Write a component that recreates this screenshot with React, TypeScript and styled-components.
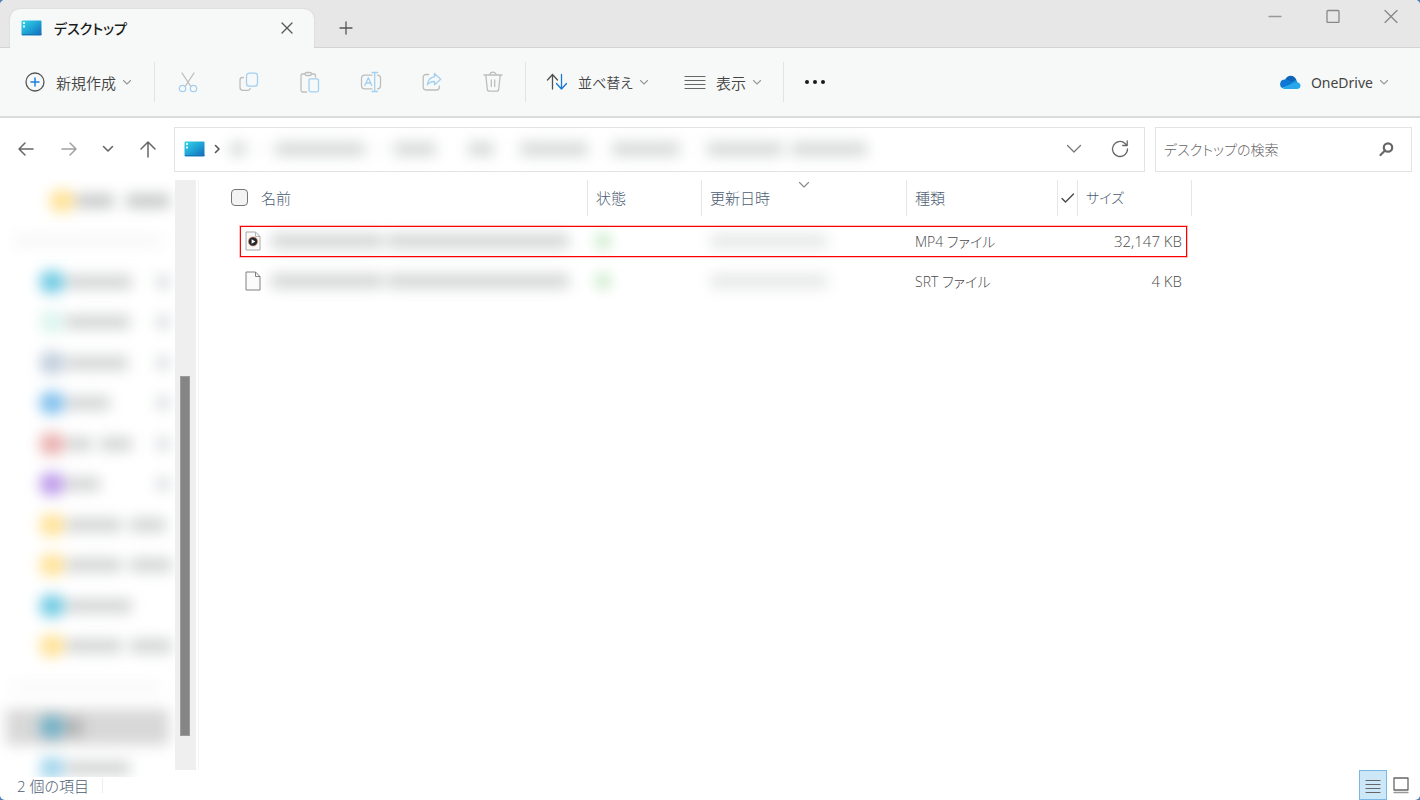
import React, { useState } from "react";
import styled, { createGlobalStyle, css } from "styled-components";

const GlobalStyle = createGlobalStyle`
  * { box-sizing: border-box; }
  body {
    margin: 0;
    background: #4b7fb5;
    color: #444;
    font-family: "Open Sans", "Noto Sans CJK JP", sans-serif;
    font-size: 15px;
    font-feature-settings: "palt";
  }
  button, input { font: inherit; font-feature-settings: inherit; color: inherit; }
  button { padding: 0; border: 0; background: none; cursor: pointer; }
  button:disabled { cursor: default; }
  ul { list-style: none; margin: 0; padding: 0; }
  svg { display: block; flex: none; }
`;

const Window = styled.div`
  display: flex;
  flex-direction: column;
  min-height: 100vh;
  background: #fff;
  border-radius: 5px;
  overflow: hidden;
`;

/* ---------- title bar ---------- */
const TitleBar = styled.header`
  display: flex;
  height: 48px;
  padding-left: 10px;
  background: #e7e7e7;
  box-shadow: inset 0 -1px #d3d3d3;
`;

const Tab = styled.div`
  display: flex;
  align-items: center;
  gap: 12px;
  width: 304px;
  height: 39px;
  margin-top: 9px;
  padding: 0 18px 2px 11px;
  border-radius: 10px 10px 0 0;
  background: #f7f9f8;
  box-shadow: 0 0 2px #ccc;
  color: #1c1c1c;
  clip-path: inset(-3px -3px 0 -3px);
`;

const TabTitle = styled.span`
  flex: 1;
  font-size: 14px;
  font-weight: 500;
`;

const IconButton = styled.button<{ $width?: number }>`
  display: flex;
  align-items: center;
  justify-content: center;
  width: ${(p) => p.$width ?? 18}px;
  height: 32px;
`;

const NewTab = styled(IconButton)`
  margin: 12px 0 0 16px;
`;

const WindowControls = styled.div`
  display: flex;
  margin-left: auto;
`;

/* ---------- toolbar ---------- */
const Toolbar = styled.div`
  display: flex;
  align-items: center;
  height: 70px;
  padding: 0 31px 0 24px;
  background: #f7f9f8;
  border-bottom: 2px solid #dadbdb;
`;

const MenuButton = styled.button<{ $kana?: boolean }>`
  display: flex;
  align-items: center;
  gap: 10px;
  height: 36px;
  font-size: ${(p) => (p.$kana ? 14 : 15)}px;
  font-weight: 350;
  white-space: nowrap;
  svg:last-child { margin-left: -4px; }
`;

const AccountButton = styled(MenuButton)`
  font-family: "Noto Sans", sans-serif;
  font-size: 14px;
  font-weight: 400;
`;

const Divider = styled.span<{ $before: number; $after: number }>`
  width: 1px;
  height: 40px;
  margin: 0 ${(p) => p.$after}px 0 ${(p) => p.$before}px;
  background: #e2e4e4;
`;

const Spacer = styled.span<{ $size?: number }>`
  flex: ${(p) => (p.$size ? `0 0 ${p.$size}px` : "1")};
`;

/* ---------- address row ---------- */
const AddressRow = styled.div`
  display: flex;
  align-items: center;
  height: 62px;
  padding: 0 8px 0 15px;
`;

const NavButtons = styled.nav`
  display: flex;
  align-items: center;
  justify-content: space-between;
  width: 144px;
  margin-right: 15px;
`;

const boxed = css`
  display: flex;
  align-items: center;
  height: 45px;
  border: 1px solid #e3e3e3;
  background: #fff;
`;

const PathBox = styled.div`
  ${boxed}
  flex: 1;
  gap: 9px;
  padding: 0 13px 0 9px;
  margin-right: 10px;
`;

const SearchBox = styled.label`
  ${boxed}
  width: 257px;
  padding: 0 17px 0 8px;
`;

const SearchInput = styled.input`
  flex: 1;
  min-width: 0;
  padding: 0;
  border: 0;
  outline: 0;
  background: none;
  font-size: 14px;
  font-weight: 300;
  &::placeholder { color: #666; opacity: 1; }
`;

/* ---------- redacted content ---------- */
const Blurred = styled.span`
  display: flex;
  align-items: center;
  filter: blur(7px);
`;

const Bar = styled.i<{ $w: number; $gap?: number; $tone?: string; $h?: number }>`
  flex: none;
  width: ${(p) => p.$w}px;
  height: ${(p) => p.$h ?? 14}px;
  margin-left: ${(p) => p.$gap ?? 0}px;
  border-radius: 3px;
  background: ${(p) => p.$tone ?? "#d2d4d4"};
`;

/* ---------- body ---------- */
const Body = styled.div`
  display: flex;
  flex: 1;
`;

const Sidebar = styled.nav`
  width: 175px;
  height: 597px;
  margin-bottom: -7px;
  overflow: hidden;
`;

const SideItem = styled.li<{ $selected?: boolean; $indent?: number }>`
  position: relative;
  display: flex;
  align-items: center;
  height: 41px;
  padding-left: ${(p) => p.$indent ?? 40}px;
  &:nth-child(even) { height: 40px; }
  ${(p) =>
    p.$selected &&
    css`
      &::before {
        content: "";
        position: absolute;
        inset: 2px 6px 2px 6px;
        background: #d8d8d8;
        filter: blur(7px);
      }
    `}
`;

const SideIcon = styled.i<{ $tone: string }>`
  flex: none;
  width: 24px;
  height: 22px;
  border-radius: 8px;
  background: ${(p) => p.$tone};
`;

const PinMark = styled(Blurred)`
  margin: 0 5px 0 auto;
`;

const ScrollTrack = styled.div`
  display: grid;
  grid-template-rows: 196fr 360fr 34fr;
  width: 21px;
  padding: 0 6px 0 5px;
  background: #efefef;
`;

const ScrollThumb = styled.div`
  grid-row: 2;
  background: #858585;
  border: 1px solid #9c9c9c;
`;

const Content = styled.main`
  flex: 1;
  margin-left: 2px;
  padding-left: 31px;
  border-left: 1px solid #f3f3f3;
`;

const FileTable = styled.table`
  width: 962px;
  table-layout: fixed;
  border-collapse: separate;
  border-spacing: 0;
`;

const HeadCell = styled.th<{ $kana?: boolean }>`
  position: relative;
  height: 36px;
  padding: 0 0 2px 8px;
  border-right: 1px solid #e6e6e6;
  color: #4c5c72;
  font-size: ${(p) => (p.$kana ? 14 : 15)}px;
  font-weight: 300;
  text-align: left;
`;

const HeadInner = styled.div`
  display: flex;
  align-items: center;
  gap: 13px;
`;

const SelectAll = styled.input`
  appearance: none;
  width: 17px;
  height: 17px;
  margin: 0 0 0 -7px;
  border: 1px solid #777;
  border-radius: 4px;
  background: #f3f3f3;
  &:checked { background: #0067c0; }
`;

const SortMark = styled.span`
  position: absolute;
  top: 1px;
  left: 50%;
  transform: translateX(-50%);
`;

const CheckCell = styled(HeadCell)`
  padding: 0 0 0 3px;
`;

const HeadGap = styled.tr`
  height: 5px;
`;

const FileRow = styled.tr<{ $marked?: boolean }>`
  position: relative;
  ${(p) =>
    p.$marked &&
    css`
      &::after {
        content: "";
        position: absolute;
        inset: 5px 5px 4px 10px;
        border: 1px solid #f00;
        box-shadow: 0 0 0 1px rgba(255, 0, 0, 0.25);
        pointer-events: none;
      }
    `}
`;

const Cell = styled.td<{ $right?: boolean; $kana?: boolean }>`
  height: 40px;
  padding: 0 10px 0 8px;
  color: #4a4a4a;
  font-size: ${(p) => (p.$kana ? 14 : 15)}px;
  font-weight: 300;
  text-align: ${(p) => (p.$right ? "right" : "left")};
`;

const FileName = styled.div`
  display: flex;
  align-items: center;
  gap: 10px;
  padding-left: 7px;
`;

/* ---------- status bar ---------- */
const StatusBar = styled.footer`
  display: flex;
  align-items: center;
  height: 30px;
  padding: 0 5px 0 17px;
  color: #4c5c72;
  font-weight: 300;
`;

const StatusRule = styled.span`
  width: 1px;
  height: 15px;
  margin-left: 13px;
  background: #eee;
`;

const ViewButton = styled.button<{ $active?: boolean }>`
  display: flex;
  align-items: center;
  justify-content: center;
  width: 28px;
  height: 30px;
  border: 1px solid ${(p) => (p.$active ? "#79b7e5" : "transparent")};
  background: ${(p) => (p.$active ? "#cce8f8" : "transparent")};
`;

/* ---------- icons ---------- */
const GREY = "#bdbdbd";
const SKY = "#a3d0f1";

type IconProps = {
  w: number;
  h?: number;
  color?: string;
  stroke?: number;
  children: React.ReactNode;
};

const Icon = ({ w, h = w, color = "#555", stroke = 1.3, children }: IconProps) => (
  <svg width={w} height={h} viewBox={`0 0 ${w} ${h}`} fill="none" stroke={color}
    strokeWidth={stroke} strokeLinecap="round" strokeLinejoin="round" aria-hidden="true">
    {children}
  </svg>
);

const Chevron = ({ w = 10, color = "#999", stroke = 1.1 }: { w?: number; color?: string; stroke?: number }) => (
  <Icon w={w} h={w / 2 + 2} color={color} stroke={stroke}>
    <path d={`M1.5 1.5 L${w / 2} ${w / 2} L${w - 1.5} 1.5`} />
  </Icon>
);

const DesktopIcon = ({ id }: { id: string }) => (
  <svg width="21" height="16" viewBox="0 0 21 16" aria-hidden="true">
    <defs>
      <linearGradient id={id} x1="0" y1="0" x2="1" y2="1">
        <stop offset="0" stopColor="#37d3e6" />
        <stop offset="0.5" stopColor="#1fa4d6" />
        <stop offset="1" stopColor="#1266b8" />
      </linearGradient>
    </defs>
    <rect x="0.5" y="0.5" width="20" height="15" rx="1" fill={`url(#${id})`} />
    <path d="M1 14.5h19.500" stroke="#1575b5" />
    <path d="M2 2h2v2H2zM2 5.500h2v2H2z" fill="#d8fbff" />
  </svg>
);

const CutIcon = () => (
  <Icon w={22} color={GREY}>
    <path d="M5 2l8.500 13M17 2L8.500 15" />
    <circle cx="5.500" cy="17.500" r="3.200" stroke={SKY} />
    <circle cx="16.500" cy="17.500" r="3.200" stroke={SKY} />
  </Icon>
);

const CopyIcon = () => (
  <Icon w={22} color={GREY}>
    <path d="M5.500 6.500H4.500A2.500 2.500 0 0 0 2 9v7.500A2.800 2.800 0 0 0 4.800 19.300H10a2.500 2.500 0 0 0 2.300-2" />
    <rect x="8.500" y="2.200" width="11" height="13" rx="2.800" stroke={SKY} />
  </Icon>
);

const PasteIcon = () => (
  <Icon w={22} color={GREY}>
    <path d="M6 3H3.500A1.500 1.500 0 0 0 2 4.500v15A1.500 1.500 0 0 0 3.500 21H7.500M12.500 3h2.500a1.500 1.500 0 0 1 1.500 1.500V6" />
    <rect x="6" y="1.500" width="6.500" height="3" rx="1.500" />
    <rect x="10" y="7.800" width="9.500" height="13" rx="1.500" stroke={SKY} />
  </Icon>
);

const RenameIcon = () => (
  <Icon w={22} color={GREY}>
    <path d="M12 4.200H4.500A3 3 0 0 0 1.500 7.200v7.600a3 3 0 0 0 3 3H12M17.500 4.200a3 3 0 0 1 3 3v7.600a3 3 0 0 1-3 3" />
    <path d="M4.800 14.500L8.300 6.800l3.500 7.700M6 12h4.600M14.700 1.500v19M12 1.500h5.500M12 20.500h5.500" stroke={SKY} />
  </Icon>
);

const ShareIcon = () => (
  <Icon w={22} color={GREY}>
    <path d="M7.500 3.500H5A2.800 2.800 0 0 0 2.200 6.300v10A2.800 2.800 0 0 0 5 19h10.500a2.800 2.800 0 0 0 2.800-2.800V15" />
    <path d="M13.500 2.500l6.200 5.700-6.200 5.600v-3.300c-3.500-.2-5.500 1-7.200 3.300.4-4.500 2.700-7.500 7.200-8z" stroke={SKY} />
  </Icon>
);

const TrashIcon = () => (
  <Icon w={22} color={GREY}>
    <path d="M2 4h18M8 3.800a3 2.600 0 0 1 6 0M3.800 4.200l1.500 14a2.200 2.200 0 0 0 2.200 2h7a2.200 2.200 0 0 0 2.200-2l1.500-14M9.300 9v6.500M12.700 9v6.500" />
  </Icon>
);

const SortIcon = () => (
  <Icon w={22} color="#505050">
    <path d="M6.500 18V3.500M1.500 9l5-5.500 5 5.500" />
    <path d="M15.500 3.500V18M10.500 12.500l5 5.500 5-5.500" stroke="#1878d4" />
  </Icon>
);

const LinesIcon = () => (
  <Icon w={22} color="#666" stroke={1.2}>
    <path d="M1 5.500h20M1 9.500h20M1 13.500h20M1 17.500h20" />
  </Icon>
);

const CloudIcon = () => (
  <svg width="21" height="15" viewBox="0 0 21 15" aria-hidden="true">
    <path d="M5 5C6.300 2 8.400.8 10.700.8c2.700 0 5 1.800 5.800 4.500L11 9z" fill="#0d64b8" />
    <path d="M4.800 4.500c1.700-.3 3.200.1 4.500 1L14 8.500 2.300 13A4.600 4.600 0 0 1 4.800 4.500z" fill="#0f78d4" />
    <path d="M11 8.500c1.800-2.100 3.500-3.300 5.500-3.200l2 5-5.500-.7z" fill="#1490df" />
    <path d="M2.300 13l10-4.500c1.800-.8 3.500-1.500 5-1.200 2 .4 3.200 1.800 3.200 3.500 0 2-1.500 3.300-3.500 3.300H5c-1 0-2-.3-2.700-1.100z" fill="#28a8ea" />
  </svg>
);

const ToolIcons: [string, () => React.JSX.Element][] = [
  ["切り取り", CutIcon],
  ["コピー", CopyIcon],
  ["貼り付け", PasteIcon],
  ["名前の変更", RenameIcon],
  ["共有", ShareIcon],
  ["削除", TrashIcon],
];

const FileIcon = ({ media }: { media?: boolean }) => (
  <svg width="16" height="20" viewBox="0 0 16 20" aria-hidden="true">
    <path d="M1 1h9.500L15 5.500V19H1z" fill="#fbfbfb" stroke={media ? "#a8a8a8" : "#808080"} />
    <path d="M10.500 1v4.500H15" fill="none" stroke={media ? "#b5b5b5" : "#808080"} />
    {media && (
      <>
        <circle cx="8" cy="10.500" r="4.600" fill="#26282e" stroke="#e0996a" strokeWidth="0.700" />
        <path d="M6.600 8.200v4.600l3.800-2.300z" fill="#fff" />
      </>
    )}
  </svg>
);

/* ---------- data ---------- */
type SideEntry = { icon: string; bars: number[]; pin?: boolean; selected?: boolean };

const YELLOW = "#ffe296";
const sideEntries: SideEntry[] = [
  { icon: "#6fcae3", bars: [66], pin: true },
  { icon: "#dcf5ee", bars: [64], pin: true },
  { icon: "#c0cedd", bars: [62], pin: true },
  { icon: "#7fbfed", bars: [44], pin: true },
  { icon: "#ebb0b0", bars: [26, 32], pin: true },
  { icon: "#bd9aea", bars: [34], pin: true },
  { icon: YELLOW, bars: [56, 36] },
  { icon: YELLOW, bars: [56, 42] },
  { icon: "#6fcae3", bars: [66] },
  { icon: YELLOW, bars: [56, 42] },
];

const files = [
  { type: "MP4 ファイル", size: "32,147 KB", media: true },
  { type: "SRT ファイル", size: "4 KB", media: false },
];

const pathBars = [[16, 1], [4, 13], [90, 12], [4, 14], [42, 11], [26, 32], [68, 26], [68, 24], [76, 27], [76, 8]];

const SideRow = ({ icon, bars, pin, selected }: SideEntry) => (
  <SideItem $selected={selected}>
    <Blurred>
      <SideIcon $tone={icon} />
      {bars.map((w, i) => (
        <Bar key={i} $w={w} $gap={i ? 8 : 2} $tone={selected ? "#a8a8a8" : undefined} />
      ))}
    </Blurred>
    {pin && <PinMark><Bar $w={14} $tone="#dcdfe2" /></PinMark>}
  </SideItem>
);

export default function App() {
  const [allSelected, setAllSelected] = useState(false);
  return (
    <>
      <GlobalStyle />
      <Window>
        <TitleBar>
          <Tab>
            <DesktopIcon id="tabIcon" />
            <TabTitle>デスクトップ</TabTitle>
            <IconButton aria-label="タブを閉じる">
              <Icon w={12}><path d="M1 1l10 10M11 1L1 11" /></Icon>
            </IconButton>
          </Tab>
          <NewTab $width={32} aria-label="新しいタブ">
            <Icon w={14}><path d="M7 1v12M1 7h12" /></Icon>
          </NewTab>
          <WindowControls>
            <IconButton $width={58} aria-label="最小化">
              <Icon w={14} color="#999"><path d="M1 7.500h12" /></Icon>
            </IconButton>
            <IconButton $width={58} aria-label="最大化">
              <Icon w={14} color="#888"><rect x="1" y="1.500" width="12" height="12" rx="1" /></Icon>
            </IconButton>
            <IconButton $width={58} aria-label="閉じる">
              <Icon w={14} color="#888"><path d="M1 1.500l12 12M13 1.500l-12 12" /></Icon>
            </IconButton>
          </WindowControls>
        </TitleBar>

        <Toolbar>
          <MenuButton>
            <Icon w={22}>
              <circle cx="11" cy="11" r="9" />
              <path d="M11 7v8M7 11h8" stroke="#1a7fdb" strokeWidth="1.500" />
            </Icon>
            新規作成
            <Chevron />
          </MenuButton>
          <Divider $before={22} $after={2} />
          {ToolIcons.map(([label, Glyph]) => (
            <IconButton key={label} $width={61} disabled aria-label={label}><Glyph /></IconButton>
          ))}
          <Divider $before={2} $after={20} />
          <MenuButton $kana><SortIcon />並べ替え<Chevron /></MenuButton>
          <Spacer $size={35} />
          <MenuButton><LinesIcon />表示<Chevron /></MenuButton>
          <Divider $before={21} $after={20} />
          <IconButton $width={22} aria-label="その他">
            <svg width="22" height="6" viewBox="0 0 22 6" fill="#1a1a1a" aria-hidden="true">
              <circle cx="3" cy="3" r="2" /><circle cx="11" cy="3" r="2" /><circle cx="19" cy="3" r="2" />
            </svg>
          </IconButton>
          <Spacer />
          <AccountButton><CloudIcon />OneDrive<Chevron /></AccountButton>
        </Toolbar>

        <AddressRow>
          <NavButtons>
            <IconButton $width={22} aria-label="戻る">
              <Icon w={18} color="#666" stroke={1.5}><path d="M16 9H2M8 3L2 9l6 6" /></Icon>
            </IconButton>
            <IconButton $width={22} aria-label="進む">
              <Icon w={18} color="#a0a0a0" stroke={1.5}><path d="M2 9h14M10 3l6 6-6 6" /></Icon>
            </IconButton>
            <IconButton $width={16} aria-label="最近表示した場所"><Chevron w={12} color="#666" stroke={1.6} /></IconButton>
            <IconButton $width={22} aria-label="上へ">
              <Icon w={18} color="#666" stroke={1.5}><path d="M9 17V2M2 9l7-7 7 7" /></Icon>
            </IconButton>
          </NavButtons>
          <PathBox>
            <DesktopIcon id="pathIcon" />
            <Icon w={6} h={10} stroke={1.6}><path d="M1.500 1.500L5 5 1.500 8.500" /></Icon>
            <Blurred>
              {pathBars.map(([w, gap], i) => (
                <Bar key={i} $w={w} $gap={gap} $tone="#d6d8d8" $h={w === 4 ? 4 : 14} />
              ))}
            </Blurred>
            <Spacer />
            <IconButton $width={22} aria-label="以前の場所"><Chevron w={16} color="#777" stroke={1.3} /></IconButton>
            <Spacer $size={6} />
            <IconButton $width={22} aria-label="最新の情報に更新">
              <Icon w={20} color="#666">
                <path d="M17.500 10a7.500 7.500 0 1 1-2.500-5.600l1.800 1.800M17.200 2v4.500h-4.500" />
              </Icon>
            </IconButton>
          </PathBox>
          <SearchBox>
            <SearchInput type="text" aria-label="検索" placeholder="デスクトップの検索" />
            <Icon w={16} color="#666" stroke={2.2}>
              <circle cx="10" cy="6.500" r="4.200" /><path d="M7 9.500L2.500 14" />
            </Icon>
          </SearchBox>
        </AddressRow>

        <Body>
          <Sidebar>
            <ul>
              <SideItem $indent={50}>
                <Blurred>
                  <SideIcon $tone={YELLOW} />
                  <Bar $w={38} $gap={2} $tone="#c6c8c8" />
                  <Bar $w={44} $gap={12} $tone="#c6c8c8" />
                </Blurred>
              </SideItem>
              <SideItem $indent={12}><Blurred><Bar $w={150} $tone="#f8f8f8" /></Blurred></SideItem>
              {sideEntries.map((entry, i) => <SideRow key={i} {...entry} />)}
              <SideItem $indent={12}><Blurred><Bar $w={150} $tone="#fafafa" /></Blurred></SideItem>
              <SideRow icon="#6fb0c6" bars={[16]} selected />
              <SideRow icon="#a3d6ec" bars={[64]} />
            </ul>
          </Sidebar>
          <ScrollTrack><ScrollThumb /></ScrollTrack>
          <Content>
            <FileTable>
              <colgroup>
                <col style={{ width: 358 }} />
                <col style={{ width: 114 }} />
                <col style={{ width: 205 }} />
                <col style={{ width: 151 }} />
                <col style={{ width: 20 }} />
                <col style={{ width: 114 }} />
              </colgroup>
              <thead>
                <tr>
                  <HeadCell>
                    <HeadInner>
                      <SelectAll type="checkbox" aria-label="すべて選択" checked={allSelected}
                        onChange={(e) => setAllSelected(e.target.checked)} />
                      名前
                    </HeadInner>
                  </HeadCell>
                  <HeadCell>状態</HeadCell>
                  <HeadCell>更新日時<SortMark><Chevron w={12} color="#888" /></SortMark></HeadCell>
                  <HeadCell>種類</HeadCell>
                  <CheckCell as="td">
                    <Icon w={14} h={12} color="#444"><path d="M1 6.500l3.500 3.500L12.500 2" /></Icon>
                  </CheckCell>
                  <HeadCell $kana>サイズ</HeadCell>
                </tr>
              </thead>
              <tbody>
                <HeadGap />
                {files.map((file) => (
                  <FileRow key={file.type} $marked={file.media}>
                    <Cell>
                      <FileName>
                        <FileIcon media={file.media} />
                        <Blurred><Bar $w={112} /><Bar $w={182} $gap={4} /></Blurred>
                      </FileName>
                    </Cell>
                    <Cell><Blurred><Bar $w={14} $tone="#c3e8c3" /></Blurred></Cell>
                    <Cell><Blurred><Bar $w={118} $tone="#e6e7e7" /></Blurred></Cell>
                    <Cell $kana>{file.type}</Cell>
                    <Cell $right colSpan={2}>{file.size}</Cell>
                  </FileRow>
                ))}
              </tbody>
            </FileTable>
          </Content>
        </Body>

        <StatusBar>
          2 個の項目
          <StatusRule />
          <Spacer />
          <ViewButton $active aria-label="詳細">
            <Icon w={18} color="#666" stroke={1.2}><path d="M2 4.500h14M2 8.500h14M2 12.500h14M2 16.500h14" /></Icon>
          </ViewButton>
          <ViewButton aria-label="大アイコン">
            <Icon w={18} color="#666" stroke={1.3}>
              <path d="M2 2h14v12H2z" /><path d="M2 16.500h14" stroke="#999" />
            </Icon>
          </ViewButton>
        </StatusBar>
      </Window>
    </>
  );
}
